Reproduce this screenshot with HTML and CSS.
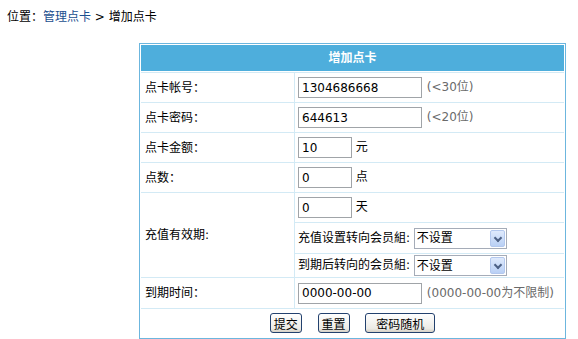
FILE: index.html
```html
<!DOCTYPE html>
<html lang="zh-CN">
<head>
    <meta charset="UTF-8">
    <title>增加点卡</title>
    <link rel="stylesheet" href="styles.css">
</head>
<body>
    <div class="crumb">位置：<a href="#">管理点卡</a> &gt; 增加点卡</div>

    <form class="card-form">
        <table class="form-table">
            <tr class="head">
                <th colspan="2">增加点卡</th>
            </tr>
            <tr>
                <td class="label">点卡帐号：</td>
                <td class="value"><input type="text" class="txt long" value="1304686668"> <span class="hint">(&lt;30位)</span></td>
            </tr>
            <tr>
                <td class="label">点卡密码：</td>
                <td class="value"><input type="text" class="txt long" value="644613"> <span class="hint">(&lt;20位)</span></td>
            </tr>
            <tr>
                <td class="label">点卡金额：</td>
                <td class="value"><input type="text" class="txt short" value="10"> 元</td>
            </tr>
            <tr>
                <td class="label">点数：</td>
                <td class="value"><input type="text" class="txt short" value="0"> 点</td>
            </tr>
            <tr class="sub">
                <td class="label" rowspan="3">充值有效期:</td>
                <td class="value"><input type="text" class="txt short" value="0"> 天</td>
            </tr>
            <tr class="sub mid">
                <td class="value">充值设置转向会员組: <span class="sel"><select><option>不设置</option></select><span class="arrow"></span></span></td>
            </tr>
            <tr class="sub last">
                <td class="value">到期后转向的会员組: <span class="sel"><select><option>不设置</option></select><span class="arrow"></span></span></td>
            </tr>
            <tr class="expire">
                <td class="label">到期时间：</td>
                <td class="value"><input type="text" class="txt long" value="0000-00-00"> <span class="hint">(0000-00-00为不限制)</span></td>
            </tr>
            <tr class="actions">
                <td colspan="2">
                    <button type="button">提交</button>
                    <button type="button">重置</button>
                    <button type="button" class="wide">密码随机</button>
                </td>
            </tr>
        </table>
    </form>
</body>
</html>
```

FILE: styles.css
```css
/* Base */
body {
    margin: 0;
    padding: 0;
    background: #fff;
    color: #000;
    font-family: "DejaVu Sans", "Noto Sans CJK SC", sans-serif;
    font-size: 12px;
}

/* Breadcrumb */
.crumb {
    padding: 8px 0 0 7px;
    height: 18px;
    line-height: 18px;
}

.crumb a {
    color: #1b4f8f;
    text-decoration: none;
}

/* Form table */
.card-form {
    margin: 17px 0 0 139px;
}

.form-table {
    width: 427px;
    border: 1px solid #6cb6de;
    border-collapse: separate;
    border-spacing: 0;
    padding: 1px;
}

.form-table td,
.form-table th {
    box-sizing: border-box;
    padding: 0;
    line-height: 16px;
    border-top: 1px solid #d3eaf5;
}

.head th {
    height: 27px;
    background: #4eaedc;
    color: #fff;
    font-weight: bold;
    text-align: center;
    border-top: none;
    border-bottom: 1px solid #fff;
}

.form-table td {
    height: 30px;
}

.label {
    width: 154px;
    padding-left: 4px !important;
    border-right: 1px solid #d3eaf5;
}

.value {
    padding-left: 3px !important;
}

.form-table .sub.mid td {
    height: 31px;
}

.form-table .sub.last td {
    height: 24px;
}

.form-table .expire td {
    height: 31px;
}

/* Inputs */
.txt {
    box-sizing: border-box;
    height: 21px;
    border: 1px solid #a0a4a8;
    padding: 0 3px;
    font-family: inherit;
    font-size: 12px;
    color: #000;
    vertical-align: middle;
}

.txt.long {
    width: 124px;
}

.txt.short {
    width: 54px;
}

.hint {
    color: #6a6a6a;
    margin-left: 1px;
}

/* Select with xp arrow */
.sel {
    position: relative;
    display: inline-block;
    vertical-align: middle;
    width: 93px;
    height: 21px;
}

.sel select {
    appearance: none;
    -webkit-appearance: none;
    box-sizing: border-box;
    width: 93px;
    height: 21px;
    border: 1px solid #a5acb8;
    background: #fff;
    padding: 0 2px;
    font-family: inherit;
    font-size: 12px;
    color: #000;
}

.sel .arrow {
    position: absolute;
    top: 2px;
    right: 2px;
    width: 15px;
    height: 17px;
    background: linear-gradient(#dfeafc, #b9d0f5);
    border: 1px solid #b3c8ee;
    box-sizing: border-box;
    border-radius: 2px;
}

.sel .arrow::after {
    content: "";
    position: absolute;
    left: 4px;
    top: 4px;
    width: 4px;
    height: 4px;
    border-right: 2px solid #4d6185;
    border-bottom: 2px solid #4d6185;
    transform: rotate(45deg);
}

/* Buttons */
.form-table .actions td {
    text-align: center;
    height: 29px;
}

.actions button {
    height: 20px;
    padding: 0 3px;
    margin: 0 6px;
    font-family: inherit;
    font-size: 12px;
    color: #000;
    border: 1px solid #23416e;
    border-radius: 3px;
    background: linear-gradient(#ffffff, #ecebe6 80%, #d6d0c5);
    vertical-align: middle;
}

.actions button.wide {
    width: 70px;
}
```
